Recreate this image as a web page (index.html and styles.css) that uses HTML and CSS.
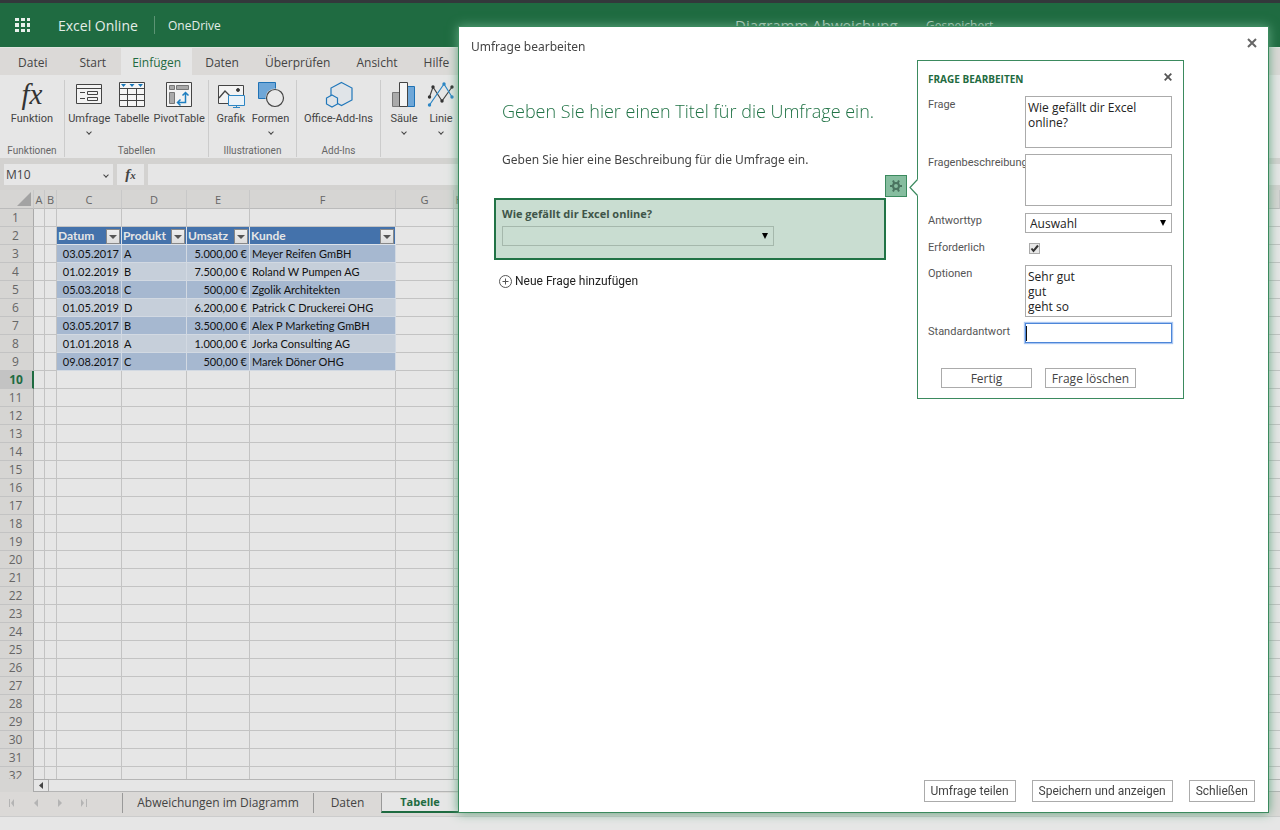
FILE: index.html
```html
<!DOCTYPE html>
<html lang="de">
<head>
<meta charset="utf-8">
<title>Excel Online</title>
<link rel="stylesheet" href="styles.css">
</head>
<body>
<div class="app" id="app">
  <header class="topbar">
    <button class="waffle" aria-label="App-Startfeld"><svg width="16" height="16" viewBox="0 0 16 16" fill="#e8f0eb"><path d="M0 1h4v3H0zM6 1h4v3H6zM12 1h3v3h-3zM0 6h4v4H0zM6 6h4v4H6zM12 6h3v4h-3zM0 12h4v3H0zM6 12h4v3H6zM12 12h3v3h-3z"/></svg></button>
    <span class="brand">Excel Online</span>
    <a class="drive" href="#">OneDrive</a>
    <span class="docname">Diagramm Abweichung</span>
    <span class="saved">Gespeichert</span>
  </header>
  <nav class="tabs">
    <button class="tab tab-file">Datei</button>
    <button class="tab tab-start">Start</button>
    <button class="tab active">Einfügen</button>
    <button class="tab">Daten</button>
    <button class="tab">Überprüfen</button>
    <button class="tab">Ansicht</button>
    <button class="tab">Hilfe</button>
  </nav>
  <div class="ribbon">
    <section class="group group-fn">
      <div class="tools">
        <button class="tool"><b class="fx-big" aria-hidden="true">fx</b><span>Funktion</span></button>
      </div>
      <h2>Funktionen</h2>
    </section>
    <section class="group group-tables">
      <div class="tools">
        <button class="tool"><svg width="28" height="28" viewBox="0 0 28 28" fill="none" stroke="#444"><path d="M1.500 4.500h25v19h-25z" fill="#f3f3f3"/><path d="M1.500 8.500h25M5 12.500h5M5 18.500h5M12.500 11.500h10v3h-10zM12.500 17.500h10v3h-10z"/></svg><span>Umfrage</span><i class="chev"></i></button>
        <button class="tool"><svg width="28" height="28" viewBox="0 0 28 28" fill="none" stroke="#444"><path d="M1.500 2.500h25v24h-25z" fill="#f5f5f5"/><path d="M1.500 8.500h25M1.500 14.500h25M1.500 20.500h25M9.500 8.500v18M18.500 8.500v18"/><path d="M3 4h5L5.500 7zM11.500 4h5L14 7zM20 4h5l-2.500 3z" fill="#1876b8" stroke="none"/></svg><span>Tabelle</span></button>
        <button class="tool"><svg width="28" height="28" viewBox="0 0 28 28" fill="none" stroke="#444"><path d="M1.500 2.500h25v24h-25z" fill="#f3f3f3"/><path d="M4.500 5.500h5v4h-5zM11.500 5.500h12v4h-12zM4.500 12.500h5v11h-5z" fill="#aaa" stroke="#777"/><path d="M20.500 12.500v10h-8M17.500 15.500l3-3 3 3M15.500 19.500l-3 3 3 3" stroke="#1f7fc0" stroke-width="1.500"/></svg><span>PivotTable</span></button>
      </div>
      <h2>Tabellen</h2>
    </section>
    <section class="group group-ill">
      <div class="tools">
        <button class="tool"><svg width="30" height="28" viewBox="0 0 30 28" fill="none" stroke="#444"><path d="M2.500 5.500h25v18h-25z" fill="#f3f3f3"/><path d="M3 18l6-7 6 6" stroke-width="1.300"/><circle cx="22" cy="10" r="1.500" fill="#333"/><path d="M12.500 15.500h16v10h-16z" fill="#eaf2f8" stroke="#2c86c4"/><path d="M20.500 25.500v2M17 27.500h7" stroke="#2c86c4"/></svg><span>Grafik</span></button>
        <button class="tool"><svg width="28" height="28" viewBox="0 0 28 28"><path d="M1.500 2.500h17v16h-17z" fill="#6fa7d8" stroke="#1f72b5"/><circle cx="18" cy="18" r="9.500" fill="#e6e6e6"/><circle cx="18" cy="18" r="8.500" fill="#e9e9e9" stroke="#444" stroke-width="1.200"/></svg><span>Formen</span><i class="chev"></i></button>
      </div>
      <h2>Illustrationen</h2>
    </section>
    <section class="group group-add">
      <div class="tools">
        <button class="tool"><svg width="28" height="28" viewBox="0 0 28 28" fill="#e0e4e8" stroke="#2077ba" stroke-width="1.200"><path d="M16.500 2.500L27 8v12l-10.500 5.500L6 20V8z"/><path d="M7 15l5.500 3v6L7 27l-5.500-3v-6z"/></svg><span>Office-Add-Ins</span></button>
      </div>
      <h2>Add-Ins</h2>
    </section>
    <section class="group group-charts">
      <div class="tools">
        <button class="tool"><svg width="28" height="28" viewBox="0 0 28 28"><path d="M2.500 12.500h8v14h-8z" fill="#aaa" stroke="#777"/><path d="M17.500 6.500h7v20h-7z" fill="#6fa7d8" stroke="#1f72b5"/><path d="M9.500 2.500h8v24h-8z" fill="#f5f5f5" stroke="#444"/></svg><span>Säule</span><i class="chev"></i></button>
        <button class="tool"><svg width="28" height="28" viewBox="0 0 28 28" fill="none"><path d="M2.500 17L6 7l9 14L25 7" stroke="#444" stroke-width="1.200"/><path d="M2.500 25L17 4l8 13" stroke="#2c86c4" stroke-width="1.200"/><g fill="#333"><circle cx="2.500" cy="17" r="1.700"/><circle cx="6" cy="7" r="1.700"/><circle cx="15" cy="21" r="1.700"/><circle cx="25" cy="7" r="1.700"/></g><g fill="#2c86c4"><circle cx="2.500" cy="25" r="1.700"/><circle cx="17" cy="4" r="1.700"/><circle cx="25" cy="17" r="1.700"/></g></svg><span>Linie</span><i class="chev"></i></button>
      </div>
    </section>
  </div>
  <div class="formula">
    <div class="namebox"><input value="M10" aria-label="Namenfeld"><i class="chev"></i></div>
    <button class="fx" aria-label="Funktion einfügen">f<small>x</small></button>
    <input class="fline" aria-label="Bearbeitungsleiste">
  </div>
  <main class="sheet">
    <table class="grid">
      <colgroup><col class="c-n"><col class="c-a"><col class="c-b"><col class="c-c"><col class="c-c"><col class="c-e"><col class="c-f"><col class="c-g"><col class="c-b"><col></colgroup>
      <thead><tr><th class="corner"><svg width="14" height="14" viewBox="0 0 14 14"><path d="M14 0v14H0z" fill="#a3a3a3"/></svg></th><th>A</th><th>B</th><th>C</th><th>D</th><th>E</th><th>F</th><th>G</th><th>H</th><th></th></tr></thead>
      <tbody>
        <tr><th>1<td><td><td><td><td><td><td><td><td>
        <tr class="head"><th>2<td><td>
          <td class="h"><div>Datum<button aria-label="Datum filtern"></button></div>
          <td class="h"><div>Produkt<button aria-label="Produkt filtern"></button></div>
          <td class="h"><div>Umsatz<button aria-label="Umsatz filtern"></button></div>
          <td class="h"><div>Kunde<button aria-label="Kunde filtern"></button></div><td><td><td>
        <tr class="d1"><th>3<td><td><td class="v r">03.05.2017<td class="v">A<td class="v r">5.000,00 €<td class="v">Meyer Reifen GmBH<td><td><td>
        <tr class="d2"><th>4<td><td><td class="v r">01.02.2019<td class="v">B<td class="v r">7.500,00 €<td class="v">Roland W Pumpen AG<td><td><td>
        <tr class="d1"><th>5<td><td><td class="v r">05.03.2018<td class="v">C<td class="v r">500,00 €<td class="v">Zgolik Architekten<td><td><td>
        <tr class="d2"><th>6<td><td><td class="v r">01.05.2019<td class="v">D<td class="v r">6.200,00 €<td class="v">Patrick C Druckerei OHG<td><td><td>
        <tr class="d1"><th>7<td><td><td class="v r">03.05.2017<td class="v">B<td class="v r">3.500,00 €<td class="v">Alex P Marketing GmBH<td><td><td>
        <tr class="d2"><th>8<td><td><td class="v r">01.01.2018<td class="v">A<td class="v r">1.000,00 €<td class="v">Jorka Consulting AG<td><td><td>
        <tr class="d1"><th>9<td><td><td class="v r">09.08.2017<td class="v">C<td class="v r">500,00 €<td class="v">Marek Döner OHG<td><td><td>
        <tr><th class="cur">10<td><td><td><td><td><td><td><td><td>
        <tr><th>11<td><td><td><td><td><td><td><td><td>
        <tr><th>12<td><td><td><td><td><td><td><td><td>
        <tr><th>13<td><td><td><td><td><td><td><td><td>
        <tr><th>14<td><td><td><td><td><td><td><td><td>
        <tr><th>15<td><td><td><td><td><td><td><td><td>
        <tr><th>16<td><td><td><td><td><td><td><td><td>
        <tr><th>17<td><td><td><td><td><td><td><td><td>
        <tr><th>18<td><td><td><td><td><td><td><td><td>
        <tr><th>19<td><td><td><td><td><td><td><td><td>
        <tr><th>20<td><td><td><td><td><td><td><td><td>
        <tr><th>21<td><td><td><td><td><td><td><td><td>
        <tr><th>22<td><td><td><td><td><td><td><td><td>
        <tr><th>23<td><td><td><td><td><td><td><td><td>
        <tr><th>24<td><td><td><td><td><td><td><td><td>
        <tr><th>25<td><td><td><td><td><td><td><td><td>
        <tr><th>26<td><td><td><td><td><td><td><td><td>
        <tr><th>27<td><td><td><td><td><td><td><td><td>
        <tr><th>28<td><td><td><td><td><td><td><td><td>
        <tr><th>29<td><td><td><td><td><td><td><td><td>
        <tr><th>30<td><td><td><td><td><td><td><td><td>
        <tr><th>31<td><td><td><td><td><td><td><td><td>
        <tr><th>32<td><td><td><td><td><td><td><td><td>
      </tbody>
    </table>
  </main>
  <div class="hscroll"><button aria-label="Nach links"><svg width="5" height="7" viewBox="0 0 5 7"><path d="M4 0v7L0 3.500z" fill="#444"/></svg></button><div class="track"></div></div>
  <footer class="sheets">
    <div class="navs">
      <button aria-label="Erstes Blatt"><svg width="8" height="8" viewBox="0 0 8 8"><path d="M1 0h1v8H1zM6 0v8L3 4z"/></svg></button>
      <button aria-label="Vorheriges Blatt"><svg width="8" height="8" viewBox="0 0 8 8"><path d="M6 0v8L2 4z"/></svg></button>
      <button aria-label="Nächstes Blatt"><svg width="8" height="8" viewBox="0 0 8 8"><path d="M2 0v8l4-4z"/></svg></button>
      <button aria-label="Letztes Blatt"><svg width="8" height="8" viewBox="0 0 8 8"><path d="M1 0v8l3-4zM6 0h1v8H6z"/></svg></button>
    </div>
    <button class="st st-first">Abweichungen im Diagramm</button>
    <button class="st st-mid">Daten</button>
    <button class="st on">Tabelle</button>
  </footer>
  <div class="status"></div>
</div>

<div class="dialog" role="dialog" aria-labelledby="dlg">
  <div class="dlg-head">
    <h1 id="dlg">Umfrage bearbeiten</h1>
    <button class="x" aria-label="Dialog schließen"><svg width="10" height="10" viewBox="0 0 10 10"><path d="M1 1l8 8M9 1L1 9" stroke="#666" stroke-width="2"/></svg></button>
  </div>
  <div class="survey">
    <p class="s-title">Geben Sie hier einen Titel für die Umfrage ein.</p>
    <p class="s-desc">Geben Sie hier eine Beschreibung für die Umfrage ein.</p>
    <div class="question">
      <label for="q1">Wie gefällt dir Excel online?</label>
      <select id="q1"><option></option></select>
      <button class="gear" aria-label="Frage bearbeiten"><svg width="14" height="14" viewBox="0 0 14 14" fill="none" stroke="#4b7460"><circle cx="7" cy="7" r="3" stroke-width="2"/><path d="M4 1.500l1.200 2.500M10 1.500L8.800 4M4 12.500L5.200 10M10 12.500L8.800 10M1 7h2.500M10.500 7H13" stroke-width="2"/></svg></button>
    </div>
    <button class="addq"><svg width="13" height="13" viewBox="0 0 13 13" fill="none" stroke="#555"><circle cx="6.500" cy="6.500" r="6"/><path d="M6.500 3.500v6M3.500 6.500h6"/></svg>Neue Frage hinzufügen</button>
  </div>
  <form class="panel" onsubmit="return false">
    <svg class="arrow" width="9" height="17" viewBox="0 0 9 17"><path d="M9 0v17L1 8.500z" fill="#fff"/><path d="M8.500 0.500L1 8.500l7.500 8" fill="none" stroke="#3b8a5e" stroke-width="1.200"/></svg>
    <div class="panel-head">
      <h2>FRAGE BEARBEITEN</h2>
      <button type="button" class="x" aria-label="Schließen"><svg width="8" height="8" viewBox="0 0 8 8"><path d="M0.700 0.700l6.600 6.600M7.300 0.700L0.700 7.300" stroke="#555" stroke-width="1.800"/></svg></button>
    </div>
    <div class="fields">
      <label for="f1">Frage</label><textarea id="f1">Wie gefällt dir Excel online?</textarea>
      <label for="f2">Fragenbeschreibung</label><textarea id="f2"></textarea>
      <label for="f3">Antworttyp</label><select id="f3"><option>Auswahl</option></select>
      <label for="f4">Erforderlich</label><input type="checkbox" id="f4" checked>
      <label for="f5">Optionen</label><textarea id="f5">Sehr gut
gut
geht so</textarea>
      <label for="f6">Standardantwort</label><input type="text" id="f6">
    </div>
    <div class="panel-actions"><button type="button">Fertig</button><button type="button">Frage löschen</button></div>
  </form>
  <div class="dlg-actions"><button>Umfrage teilen</button><button>Speichern und anzeigen</button><button>Schließen</button></div>
</div>
</body>
</html>
```
FILE: styles.css
```css
* { box-sizing: border-box; }
body, h1, h2, p { margin: 0; }
body { height: 100vh; overflow: hidden; font-family: "Open Sans", "Noto Sans", sans-serif; font-size: 12px; color: #444; background: #e6e6e6; }
button { font: inherit; color: inherit; background: none; border: 0; padding: 0; }
svg { display: block; }
input, select, textarea { font: inherit; border-radius: 0; outline: 0; }

.app { display: flex; flex-direction: column; height: 100vh; border-top: 3px solid #33383b; }

.topbar { display: flex; align-items: center; flex: none; height: 45px; padding-left: 15px; background: #1f6b41; color: #e4ede8; border-bottom: 1px solid #e0e6e0; }
.brand { margin-left: 27px; width: 96px; font-size: 14px; white-space: nowrap; }
.drive { width: 567px; padding: 2px 0 0 13px; border-left: 1px solid #5c9474; color: inherit; text-decoration: none; line-height: 16px; white-space: nowrap; }
.docname { width: 191px; margin-left: 14px; font-size: 15px; white-space: nowrap; color: #bcd0c4; }
.saved { color: #bcd0c4; }

.tabs { display: flex; flex: none; height: 27px; background: #dbd9d7; }
.tab { padding: 1px 13px 0; }
.tab-file { padding-left: 18px; padding-right: 16px; }
.tab-start { padding-left: 16px; padding-right: 15px; }
.tab.active { padding-left: 11px; padding-right: 11px; background: #e6e6e6; color: #1f6b41; }

.ribbon { display: flex; flex: none; height: 83px; padding: 5px 0 0; background: #e6e6e6; }
.group { display: flex; flex-direction: column; justify-content: space-between; border-right: 1px solid #ccc; margin-bottom: 1px; }
.group h2 { font-family: Roboto, "Open Sans", sans-serif; font-size: 10px; font-weight: 400; line-height: 12px; color: #666; text-align: center; }
.group-fn { width: 65px; }
.group-tables { width: 144px; }
.group-ill { width: 88px; }
.group-add { width: 84px; }
.group-charts { width: 90px; border-right: 0; }
.tools { display: flex; justify-content: center; gap: 4px; }
.group-charts .tools { justify-content: flex-start; gap: 9px; padding-left: 9px; }
.group-ill .tools { gap: 6px; }
.tool { display: flex; flex-direction: column; align-items: center; font-family: Roboto, "Open Sans", sans-serif; font-size: 11px; line-height: 14px; white-space: nowrap; }
.tool > span { margin-top: 4px; }
.fx-big { width: 30px; height: 28px; font: italic 400 29px/28px "Liberation Serif", serif; color: #333; }
.chev { width: 4px; height: 4px; margin-top: 4px; border: solid #444; border-width: 0 1px 1px 0; transform: rotate(45deg); }

.formula { display: flex; gap: 4px; flex: none; height: 32px; padding: 6px 0 5px 4px; background: #d3d2d0; }
.namebox { display: flex; align-items: center; width: 109px; padding: 0 5px 0 2px; background: #e6e6e6; }
.namebox input { flex: 1; min-width: 0; padding: 0; border: 0; background: none; color: #444; }
.namebox .chev { margin: 0; }
.fx { width: 27px; background: #e6e6e6; font: italic bold 15px/18px "Liberation Serif", serif; }
.fx small { font-size: 11px; }
.fline { flex: 1; border: 0; background: #e6e6e6; }

.sheet { flex: 1; min-height: 0; overflow: hidden; }
.grid { width: 100%; table-layout: fixed; border-spacing: 0; line-height: 17px; }
.c-n { width: 34px; } .c-a { width: 11px; } .c-b { width: 12px; } .c-c { width: 65px; }
.c-e { width: 63px; } .c-f { width: 146px; } .c-g { width: 58px; }
.grid th, .grid td { height: 18px; padding: 0; border: solid #c3c3c3; border-width: 0 1px 1px 0; white-space: nowrap; }
.grid th { background: #d6d5d3; font-weight: 400; font-size: 12px; color: #666; }
.grid thead th { height: 19px; font-size: 11px; border-bottom-color: #bbb; border-right-color: #c8c8c8; }
.grid tbody th { padding-right: 2px; border-right-color: #aaa; }
.grid tbody th.cur { border-right: 2px solid #1f6b41; background: #c3c3c3; color: #1f6b41; font-weight: 700; padding: 0; }
.corner svg { margin-left: 17px; }
.grid td:last-child { border-right: 0; }
.grid td.h { background: #4472ab; color: #e6e6e6; border-color: #dce2ea; font: bold 12px/17px Lato, "Open Sans", sans-serif; }
.h div { display: flex; justify-content: space-between; padding-left: 1px; }
.h button { width: 14px; height: 15px; margin: 2px 1px 0 0; border: 1px solid #888; background: linear-gradient(#eee, #ddd); display: flex; align-items: center; justify-content: center; }
.h button::before { content: ""; border: 4px solid transparent; border-top: 4px solid #555; border-bottom: 0; }
.grid td.v { padding: 0 1px 0 2px; color: #111; border-color: #d2d9e2; font-family: Lato, "Open Sans", sans-serif; font-size: 11px; }
.grid td.r { padding-right: 2px; text-align: right; }
.d1 td.v { background: #a6b8d0; }
.d2 td.v { background: #c6cfda; }

.hscroll { display: flex; flex: none; height: 13px; padding-left: 33px; background: #d6d5d3; }
.hscroll button { display: flex; align-items: center; justify-content: center; width: 16px; border: 1px solid #aaa; background: #e6e6e6; }
.track { flex: 1; border: solid #b5b5b5; border-width: 1px 0; background: #e6e6e6; }
.sheets { display: flex; flex: none; height: 25px; padding: 1px 0 3px; background: #dbd9d7; border-bottom: 1px solid #ccc; }
.navs { display: flex; align-items: center; gap: 16px; width: 122px; padding-left: 8px; fill: #b4b4b4; }
.st { border-left: 1px solid #999; padding-bottom: 2px; }
.st-first { width: 191px; }
.st-mid { width: 68px; }
.st.on { width: 77px; background: #e6e6e6; color: #1f6b41; font-weight: 700; font-size: 11px; border-bottom: 2px solid #1f6b41; }
.status { flex: none; height: 13px; background: #e6e6e6; }

.dialog { position: fixed; top: 26px; right: 11px; bottom: 17px; left: 458px; display: flex; flex-direction: column; background: #fff; border: 1px solid #3b8a5e; box-shadow: 0 0 10px #5fa47e; }
.dlg-head { display: flex; justify-content: space-between; padding: 10px 10px 0 12px; }
.dlg-head h1 { font-size: 12px; font-weight: 400; line-height: 20px; font-family: "Noto Sans", sans-serif; }
.dlg-head .x { align-self: flex-start; padding: 1px; }
.survey { flex: 1; width: 427px; padding-left: 35px; }
.s-title { padding: 40px 0 0 8px; font-size: 18px; font-weight: 300; line-height: 28px; color: #217346; white-space: nowrap; }
.s-desc { padding: 25px 0 28px 8px; line-height: 20px; white-space: nowrap; font-family: "Noto Sans", sans-serif; }
.question { position: relative; display: flex; flex-direction: column; height: 62px; padding: 6px; border: 2px solid #217346; background: #c9ddd1; }
.question label { font-size: 11px; font-weight: 700; line-height: 16px; color: #3f5549; }
.question select { width: 272px; height: 20px; margin-top: 4px; border: 1px solid #a5b8ac; }
select { appearance: none; padding: 0 4px; background: url("data:image/svg+xml,%3Csvg xmlns='http://www.w3.org/2000/svg' width='6' height='6'%3E%3Cpath d='M0 0h6L3 6z'/%3E%3C/svg%3E") no-repeat right 5px center; }
.gear { position: absolute; right: -23px; top: -25px; display: flex; align-items: center; justify-content: center; width: 22px; height: 22px; background: #86bd9f; border: 1px solid #3b8a5e; }
.addq { display: flex; align-items: center; gap: 3px; margin: 13px 0 0 5px; line-height: 16px; color: #222; font-family: Roboto, "Open Sans", sans-serif; }

.panel { position: absolute; top: 33px; right: 84px; width: 267px; height: 339px; padding: 10px 11px 10px 10px; background: #fff; border: 1px solid #3b8a5e; }
.arrow { position: absolute; left: -9px; top: 118px; }
.panel-head { display: flex; justify-content: space-between; height: 25px; }
.panel-head h2 { font-size: 10px; line-height: 16px; color: #1f6b41; }
.panel-head .x { align-self: flex-start; padding-top: 2px; }
.fields { display: grid; grid-template-columns: 97px 1fr; gap: 6px 0; grid-template-rows: 52px 52px 21px 20px 52px 20px; align-items: start; }
.fields label { font-family: Roboto, "Open Sans", sans-serif; font-size: 11px; line-height: 18px; color: #555; white-space: nowrap; }
textarea, .panel select, .panel input[type=text] { width: 100%; height: 20px; border: 1px solid #ababab; color: #222; }
textarea, .panel textarea { height: 52px; padding: 3px 2px; line-height: 15px; resize: none; overflow: hidden; }
.panel select { align-self: end; }
.panel input[type=text] { border: 1px solid #4d86d8; box-shadow: 0 0 1px 1px #a9c6f2; background: linear-gradient(#111, #111) no-repeat 0 2px / 1px 15px; }
.panel input[type=checkbox] { appearance: none; width: 11px; height: 11px; margin: 4px 0 0 4px; border: 1px solid #aaa; background: url("data:image/svg+xml,%3Csvg xmlns='http://www.w3.org/2000/svg' width='9' height='9'%3E%3Cpath d='M1.500 4.500l2 2.500L8 1.500' fill='none' stroke='%23333' stroke-width='2'/%3E%3C/svg%3E") #e8e8e8; }
.panel-actions { display: flex; gap: 13px; margin: 25px 0 0 13px; }
.panel-actions button { width: 91px; height: 20px; }
.panel-actions button, .dlg-actions button { border: 1px solid #ababab; background: #fff; }
.dlg-actions { display: flex; justify-content: flex-end; gap: 16px; padding: 0 13px 10px; font-family: Roboto, "Liberation Sans", sans-serif; }
.dlg-actions button { height: 22px; padding: 0 6px; }
```
